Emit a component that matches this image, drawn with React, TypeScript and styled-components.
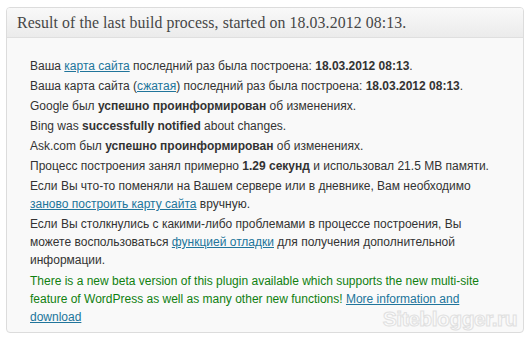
import React from "react";
import styled, { createGlobalStyle } from "styled-components";

const GlobalStyle = createGlobalStyle`
  html, body {
    margin: 0;
    padding: 0;
    background: #ffffff;
  }
`;

const Page = styled.div`
  width: 530px;
  height: 342px;
  box-sizing: border-box;
  padding: 7px 6px 9px 6px;
`;

const Panel = styled.div`
  position: relative;
  height: 100%;
  box-sizing: border-box;
  border: 1px solid #dcdcdc;
  border-radius: 4px;
  background: #f9f9f9;
  overflow: hidden;
`;

const Header = styled.h3`
  margin: 0;
  height: 29px;
  border-bottom: 1px solid #dfdfdf;
  background: linear-gradient(to bottom, #f9f9f9, #ebebeb);
  padding: 0 0 0 10px;
  font-family: "Liberation Serif", serif;
  font-weight: normal;
  font-size: 15.8px;
  line-height: 30px;
  color: #464646;
  letter-spacing: 0.1px;
`;

const List = styled.ul`
  list-style: none;
  margin: 0;
  padding: 19px 0 0 23px;
  font-family: "Liberation Sans", Arial, sans-serif;
  font-size: 12px;
  line-height: 18px;
  color: #333333;
`;

const Item = styled.li<{ $tone?: "green"; $gap?: number }>`
  margin: ${(p) => p.$gap ?? 0}px 0 2px 0;
  color: ${(p) => (p.$tone === "green" ? "#108010" : "#333333")};
`;

const Link = styled.a`
  color: #21759b;
  text-decoration: underline;
`;

const Watermark = styled.div`
  position: absolute;
  right: 6px;
  bottom: 1px;
  font-family: "Liberation Sans", Arial, sans-serif;
  font-weight: bold;
  font-size: 21px;
  letter-spacing: -0.5px;
  color: #fbfbfb;
  -webkit-text-stroke: 1px #e0e0e0;
  pointer-events: none;
`;

export default function App() {
  return (
    <Page>
      <GlobalStyle />
      <Panel>
        <Header>Result of the last build process, started on 18.03.2012 08:13.</Header>
        <List>
          <Item>
            Ваша <Link href="#">карта сайта</Link> последний раз была построена: <b>18.03.2012 08:13</b>.
          </Item>
          <Item>
            Ваша карта сайта (<Link href="#">сжатая</Link>) последний раз была построена: <b>18.03.2012 08:13</b>.
          </Item>
          <Item>
            Google был <b>успешно проинформирован</b> об изменениях.
          </Item>
          <Item>
            Bing was <b>successfully notified</b> about changes.
          </Item>
          <Item>
            Ask.com был <b>успешно проинформирован</b> об изменениях.
          </Item>
          <Item>
            Процесс построения занял примерно <b>1.29 секунд</b> и использовал 21.5 MB памяти.
          </Item>
          <Item>
            Если Вы что-то поменяли на Вашем сервере или в дневнике, Вам необходимо
            <br />
            <Link href="#">заново построить карту сайта</Link> вручную.
          </Item>
          <Item $gap={1}>
            Если Вы столкнулись с какими-либо проблемами в процессе построения, Вы
            <br />
            можете воспользоваться <Link href="#">функцией отладки</Link> для получения дополнительной
            <br />
            информации.
          </Item>
          <Item $tone="green" $gap={3}>
            There is a new beta version of this plugin available which supports the new multi-site
            <br />
            feature of WordPress as well as many other new functions! <Link href="#">More information and</Link>
            <br />
            <Link href="#">download</Link>
          </Item>
        </List>
        <Watermark>Siteblogger.ru</Watermark>
      </Panel>
    </Page>
  );
}
